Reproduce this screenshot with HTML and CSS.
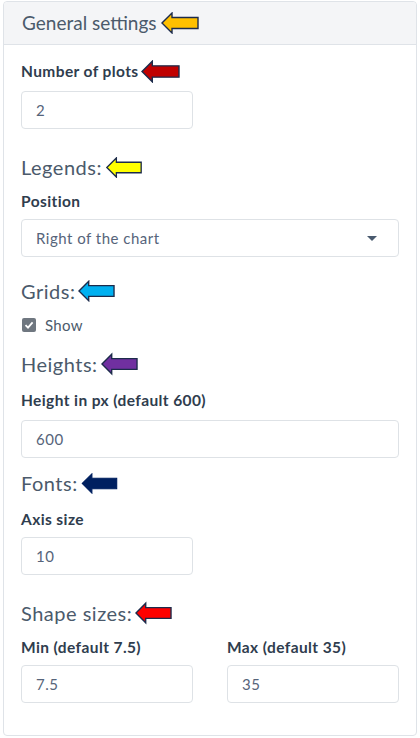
FILE: index.html
```html
<!DOCTYPE html>
<html>
<head>
<meta charset="utf-8">
<link rel="stylesheet" href="styles.css">
</head>
<body>
<div class="card">
  <div class="card-header">
    <span class="title">General settings</span>
    <svg class="arrow" width="38" height="22" viewBox="0 0 38 22"><polygon points="1,11 11,1 11,5.5 37,5.5 37,16.5 11,16.5 11,21" fill="#ffc000" stroke="#1c2b4b" stroke-width="1.4" stroke-linejoin="miter"/></svg>
  </div>
  <div class="card-body">
    <div class="label-row first">
      <label class="lbl">Number of plots</label>
      <svg class="arrow" width="39" height="23" viewBox="0 0 38 22"><polygon points="1,11 11,1 11,5.5 37,5.5 37,16.5 11,16.5 11,21" fill="#c00000" stroke="#1c2b4b" stroke-width="1.4"/></svg>
    </div>
    <div class="input half gap-in">2</div>

    <div class="heading h-legends">Legends:<svg class="arrow" width="38" height="21" viewBox="0 0 38 22"><polygon points="1,11 11,1 11,5.5 37,5.5 37,16.5 11,16.5 11,21" fill="#ffff00" stroke="#1c2b4b" stroke-width="1.4"/></svg></div>
    <label class="lbl l-pos">Position</label>
    <div class="input select gap-sel">Right of the chart<span class="caret"></span></div>

    <div class="heading h-grids">Grids:<svg class="arrow" width="37" height="22" viewBox="0 0 38 22"><polygon points="1,11 11,1 11,5.5 37,5.5 37,16.5 11,16.5 11,21" fill="#00b0f0" stroke="#1c2b4b" stroke-width="1.4"/></svg></div>
    <div class="check-row">
      <span class="checkbox"><svg width="10" height="10" viewBox="0 0 10 10"><path d="M1.5 5.2 L4 7.6 L8.6 2.4" fill="none" stroke="#fff" stroke-width="1.8"/></svg></span>
      <span class="check-label">Show</span>
    </div>

    <div class="heading h-heights">Heights:<svg class="arrow" width="37" height="24" viewBox="0 0 38 22"><polygon points="1,11 11,1 11,5.5 37,5.5 37,16.5 11,16.5 11,21" fill="#7030a0" stroke="#1c2b4b" stroke-width="1.4"/></svg></div>
    <label class="lbl l-height">Height in px (default 600)</label>
    <div class="input gap-in">600</div>

    <div class="heading h-fonts">Fonts:<svg class="arrow" width="37" height="21" viewBox="0 0 38 22"><polygon points="1,11 11,1 11,5.5 37,5.5 37,16.5 11,16.5 11,21" fill="#002060" stroke="#002060" stroke-width="1.2"/></svg></div>
    <label class="lbl l-axis">Axis size</label>
    <div class="input half gap-sel">10</div>

    <div class="heading h-shapes">Shape sizes:<svg class="arrow" width="37" height="24" viewBox="0 0 38 22"><polygon points="1,11 11,1 11,5.5 37,5.5 37,16.5 11,16.5 11,21" fill="#ff0000" stroke="#1c2b4b" stroke-width="1.4"/></svg></div>
    <div class="two-col">
      <div class="col">
        <label class="lbl">Min (default 7.5)</label>
        <div class="input gap-sel">7.5</div>
      </div>
      <div class="col">
        <label class="lbl">Max (default 35)</label>
        <div class="input gap-sel">35</div>
      </div>
    </div>
  </div>
</div>
</body>
</html>
```

FILE: styles.css
```css
html, body {
  margin: 0;
  padding: 0;
  background: #ffffff;
}
body {
  font-family: Lato, "Fira Sans", "Noto Sans", sans-serif;
  color: #2c3e50;
}
.card {
  margin: 1px 3px 0 3px;
  height: 735px;
  box-sizing: border-box;
  border: 1px solid #dfe3e8;
  border-radius: 4px;
  display: flex;
  flex-direction: column;
}
.card-header {
  height: 42px;
  background: #f4f5f7;
  border-bottom: 1px solid #dfe3e8;
  border-radius: 4px 4px 0 0;
  display: flex;
  align-items: center;
  padding-left: 18px;
  gap: 4px;
}
.title {
  font-size: 19px;
  color: #4b5a6b;
  line-height: 24px;
}
.arrow {
  display: block;
  flex: none;
}
.card-body {
  padding: 0 17px 0 17px;
}
.label-row {
  display: flex;
  align-items: center;
  gap: 2px;
  height: 22px;
}
.label-row.first {
  margin-top: 15px;
}
.lbl {
  display: block;
  font-size: 15.5px;
  letter-spacing: 0.4px;
  font-weight: 700;
  line-height: 22px;
  color: #2f3d4e;
}
.input {
  box-sizing: border-box;
  height: 38px;
  border: 1px solid #dee2e6;
  border-radius: 4px;
  padding: 0 14px;
  display: flex;
  align-items: center;
  font-size: 15px;
  letter-spacing: 0.5px;
  color: #56647a;
  position: relative;
}
.input.half {
  width: 172px;
}
.gap-in {
  margin-top: 9px;
}
.gap-sel {
  margin-top: 7px;
}
.select .caret {
  position: absolute;
  right: 21px;
  top: 16px;
  width: 0;
  height: 0;
  border-left: 5px solid transparent;
  border-right: 5px solid transparent;
  border-top: 5px solid #495a6e;
}
.heading {
  display: flex;
  align-items: center;
  gap: 3px;
  font-size: 20px;
  letter-spacing: 0.5px;
  line-height: 24px;
  height: 24px;
  color: #4b5a6b;
}
.h-legends { margin-top: 26px; }
.l-pos { margin-top: 11px; }
.h-grids { margin-top: 22px; }
.check-row {
  margin-top: 11px;
  height: 22px;
  display: flex;
  align-items: center;
  gap: 9px;
}
.checkbox {
  width: 14px;
  height: 14px;
  border-radius: 2px;
  background: #6f7780;
  display: flex;
  align-items: center;
  justify-content: center;
  margin-left: 1px;
}
.check-label {
  font-size: 15px;
  letter-spacing: 0.3px;
  color: #4b5a6b;
}
.h-heights { margin-top: 16px; }
.l-height { margin-top: 13px; }
.h-fonts { margin-top: 13px; }
.l-axis { margin-top: 13px; }
.h-shapes { margin-top: 26px; }
.two-col {
  margin-top: 11px;
  display: grid;
  grid-template-columns: 1fr 1fr;
  column-gap: 34px;
}
```
